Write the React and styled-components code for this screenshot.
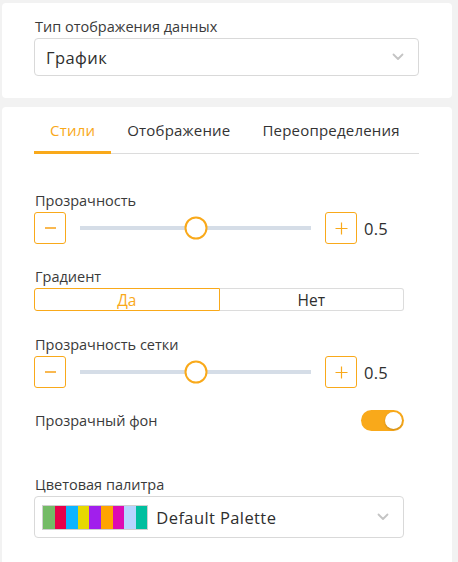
import React from 'react';
import styled, { createGlobalStyle } from 'styled-components';

const ORANGE = '#f9a91a';

const GlobalStyle = createGlobalStyle`
  html, body {
    margin: 0;
    padding: 0;
    background: #f2f2f2;
    font-family: "Open Sans", "Noto Sans", "Liberation Sans", sans-serif;
    color: #333;
  }
`;

const palette = ['#74bb66', '#e8004a', '#0db4ff', '#e6d800', '#a11fec', '#ffa400', '#de0ab3', '#b6d5ff', '#00bf9f'];

const App = () => {
  return (
    <Page>
      <GlobalStyle />
      <Card $pad="15px 33px 22px 32px">
        <Label>Тип отображения данных</Label>
        <Select $height={38}>
          <SelectText>График</SelectText>
          <Chevron />
        </Select>
      </Card>

      <Card $pad="0 33px 30px 32px" $grow>
        <Tabs>
          <Tab $active>Стили</Tab>
          <Tab>Отображение</Tab>
          <Tab>Переопределения</Tab>
        </Tabs>

        <Form>
          <Field $top={38}>
            <Label>Прозрачность</Label>
            <Slider value={0.5} />
          </Field>

          <Field $top={24}>
            <Label>Градиент</Label>
            <Segmented>
              <Segment $active>Да</Segment>
              <Segment>Нет</Segment>
            </Segmented>
          </Field>

          <Field $top={25}>
            <Label>Прозрачность сетки</Label>
            <Slider value={0.5} />
          </Field>

          <ToggleRow>
            <RowLabel>Прозрачный фон</RowLabel>
            <Toggle $on>
              <Knob />
            </Toggle>
          </ToggleRow>

          <Field $top={45}>
            <Label>Цветовая палитра</Label>
            <Select $height={42}>
              <Swatches>
                {palette.map((c) => (
                  <Swatch key={c} style={{ background: c }} />
                ))}
              </Swatches>
              <SelectText>Default Palette</SelectText>
              <Chevron />
            </Select>
          </Field>
        </Form>
      </Card>
    </Page>
  );
};

const Slider = ({ value }) => (
  <SliderRow>
    <StepButton>
      <MinusLine />
    </StepButton>
    <Track>
      <Thumb style={{ left: `${value * 100}%` }} />
    </Track>
    <StepButton>
      <PlusIcon />
    </StepButton>
    <Value>{value}</Value>
  </SliderRow>
);

const Chevron = () => (
  <ChevronBox>
    <svg width="12" height="8" viewBox="0 0 12 8">
      <path d="M1.5 1.5 L6 6 L10.5 1.5" fill="none" stroke="#c4c4c4" strokeWidth="1.8" strokeLinecap="round" strokeLinejoin="round" />
    </svg>
  </ChevronBox>
);

const PlusIcon = () => (
  <svg width="13" height="13" viewBox="0 0 13 13">
    <path d="M6.5 0.5 V12.5 M0.5 6.5 H12.5" stroke={ORANGE} strokeWidth="1.2" />
  </svg>
);

export default App;

const Page = styled.div`
  display: flex;
  flex-direction: column;
  gap: 9px;
  padding: 3px 6px 0 2px;
  min-height: 562px;
  box-sizing: border-box;
`;

const Card = styled.div`
  background: #fff;
  border-radius: 4px;
  padding: ${(p) => p.$pad};
  flex: ${(p) => (p.$grow ? 1 : 'none')};
`;

const Label = styled.div`
  font-size: 14.5px;
  line-height: 16px;
  color: #3a3a3a;
  padding-top: 1px;
  margin-bottom: 3px;
  margin-left: 1px;
`;

const Select = styled.div`
  display: flex;
  align-items: center;
  height: ${(p) => p.$height}px;
  box-sizing: border-box;
  border: 1px solid #d9d9d9;
  border-radius: 4px;
  padding: 0 14px 0 7px;
`;

const SelectText = styled.span`
  flex: 1;
  font-size: 16.5px;
  letter-spacing: 0.4px;
  color: #2e2e2e;
  padding-left: 4px;
`;

const ChevronBox = styled.span`
  display: flex;
  align-items: center;
`;

const Tabs = styled.div`
  display: flex;
  border-bottom: 1px solid #dcdcdc;
`;

const Tab = styled.div`
  padding: 14px 16px 12px;
  font-size: 15px;
  line-height: 18px;
  letter-spacing: 0.2px;
  color: ${(p) => (p.$active ? ORANGE : '#333')};
  font-weight: ${(p) => (p.$active ? 500 : 400)};
  border-bottom: 3px solid ${(p) => (p.$active ? ORANGE : 'transparent')};
  margin-bottom: -1px;
`;

const Form = styled.div`
  display: flex;
  flex-direction: column;
`;

const Field = styled.div`
  margin-top: ${(p) => p.$top}px;
  width: 370px;
`;

const SliderRow = styled.div`
  display: flex;
  align-items: center;
  height: 32px;
`;

const StepButton = styled.div`
  width: 32px;
  height: 32px;
  box-sizing: border-box;
  border: 1px solid ${ORANGE};
  border-radius: 3px;
  display: flex;
  align-items: center;
  justify-content: center;
  flex: none;
`;

const MinusLine = styled.span`
  width: 11px;
  height: 2px;
  background: #f9b850;
`;

const Track = styled.div`
  position: relative;
  width: 231px;
  flex: none;
  height: 4px;
  background: #d5dde7;
  margin: 0 14px;
`;

const Thumb = styled.span`
  position: absolute;
  top: 50%;
  width: 23px;
  height: 23px;
  box-sizing: border-box;
  border: 2.5px solid ${ORANGE};
  border-radius: 50%;
  background: #fff;
  transform: translate(-50%, -50%);
`;

const Value = styled.span`
  margin-left: 7px;
  font-size: 16.5px;
  letter-spacing: 0.3px;
  color: #2e2e2e;
`;

const Segmented = styled.div`
  display: flex;
  height: 23px;
`;

const Segment = styled.div`
  flex: 1;
  display: flex;
  align-items: center;
  justify-content: center;
  box-sizing: border-box;
  font-size: 15.5px;
  color: ${(p) => (p.$active ? ORANGE : '#2e2e2e')};
  border: 1px solid ${(p) => (p.$active ? ORANGE : '#dcdcdc')};
  border-radius: ${(p) => (p.$active ? '3px 0 0 3px' : '0 3px 3px 0')};
  ${(p) => !p.$active && 'border-left: none;'}
`;

const ToggleRow = styled.div`
  display: flex;
  align-items: center;
  justify-content: space-between;
  width: 370px;
  margin-top: 22px;
  height: 21px;
`;

const RowLabel = styled.span`
  font-size: 14.5px;
  color: #3a3a3a;
  margin-left: 1px;
`;

const Toggle = styled.div`
  width: 43px;
  height: 21px;
  border-radius: 11px;
  background: ${(p) => (p.$on ? ORANGE : '#ccc')};
  display: flex;
  align-items: center;
  justify-content: ${(p) => (p.$on ? 'flex-end' : 'flex-start')};
  padding: 0 2px;
  box-sizing: border-box;
`;

const Knob = styled.span`
  width: 17px;
  height: 17px;
  border-radius: 50%;
  background: #fff;
  box-shadow: 0 1px 2px rgba(0, 0, 0, 0.2);
`;

const Swatches = styled.div`
  display: flex;
  border: 1px solid #cfcfcf;
  height: 23px;
  margin-right: 4px;
`;

const Swatch = styled.span`
  width: 11.6px;
  height: 100%;
`;
